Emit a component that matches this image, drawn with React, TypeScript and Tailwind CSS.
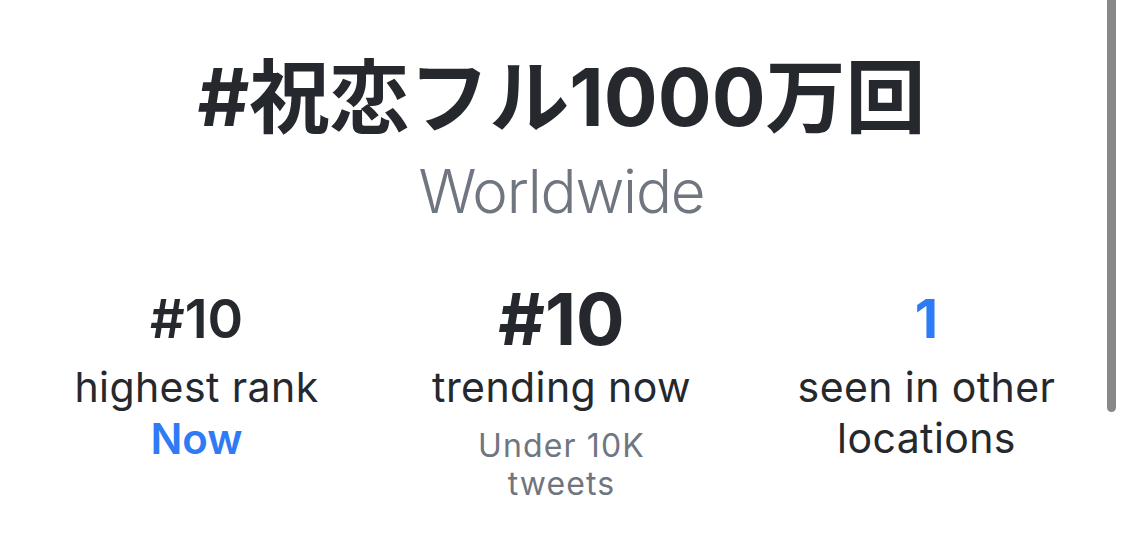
import React from "react";

const sans = "font-['Inter','Noto_Sans_CJK_JP',sans-serif]";

export default function App() {
  return (
    <div className={`relative w-[1125px] h-[559px] overflow-hidden bg-white text-[#25282d] ${sans}`}>
      <div className="flex flex-col items-center pl-[14px] pr-[16px] pt-[57px]">
        <h1 className="text-[80px] leading-[80px] font-bold">#祝恋フル1000万回</h1>
        <div className="mt-[18px] text-[60px] leading-[72px] font-light text-[#6f7680] tracking-[-0.02em]">Worldwide</div>
        <div className="mt-[49px] grid w-full grid-cols-3 text-center">
          <div className="flex flex-col items-center">
            <div className="text-[54px] leading-[86px] font-semibold">#10</div>
            <div className="text-[41px] leading-[51px] tracking-[0.01em]">highest rank</div>
            <div className="text-[42px] leading-[51px] font-semibold text-[#2f7bf5]">Now</div>
          </div>
          <div className="flex flex-col items-center">
            <div className="text-[72px] leading-[86px] font-bold">#10</div>
            <div className="text-[41px] leading-[51px] tracking-[0.01em]">trending now</div>
            <div className="mt-[14px] text-[32px] leading-[38px] tracking-[0.035em] text-[#6f7680]">
              Under 10K
              <br />
              tweets
            </div>
          </div>
          <div className="flex flex-col items-center">
            <div className="text-[54px] leading-[86px] font-bold text-[#2f7bf5]">1</div>
            <div className="text-[41px] leading-[51px] tracking-[0.01em]">
              seen in other
              <br />
              locations
            </div>
          </div>
        </div>
      </div>
      <div className="absolute right-[9px] top-0 h-[412px] w-[9px] rounded-b-full bg-[#888888]" />
    </div>
  );
}
